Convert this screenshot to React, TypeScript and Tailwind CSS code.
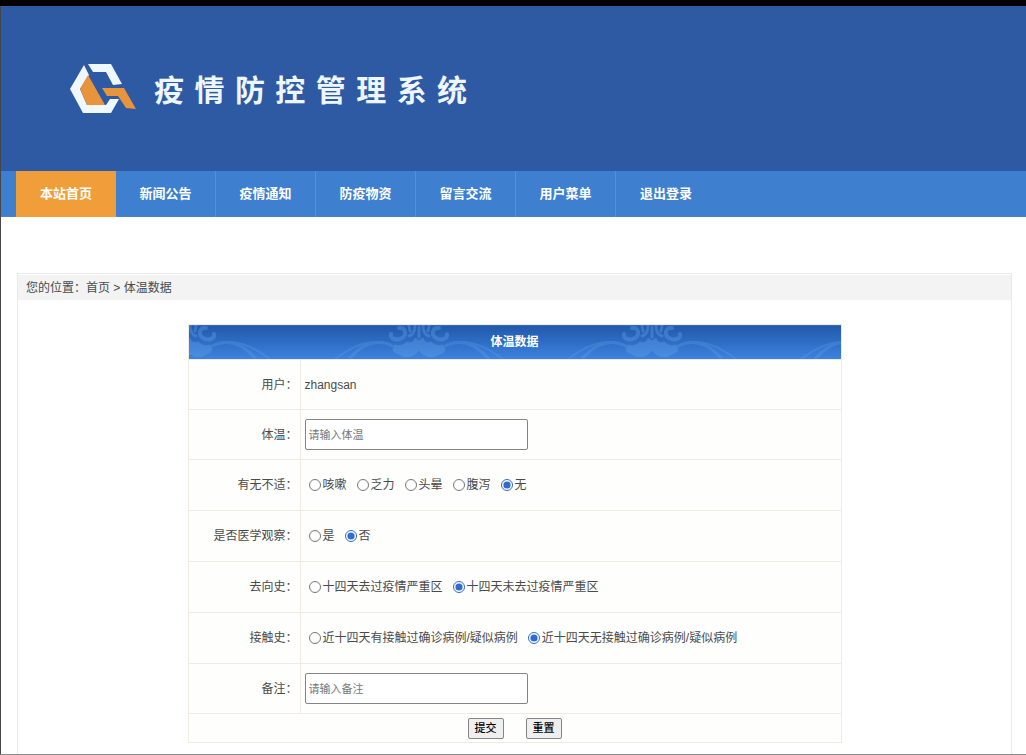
import { ReactNode } from "react";

const NAV_ITEMS = [
  "本站首页",
  "新闻公告",
  "疫情通知",
  "防疫物资",
  "留言交流",
  "用户菜单",
  "退出登录",
];

const Logo = () => (
  <svg width="66" height="50" viewBox="0 0 66 50" aria-hidden="true">
    <path
      d="M14 1 L19 11 L10 25 L17 41 H36 L40 35 H49 L41 49 H13 L0 25 Z"
      fill="#eef8fe"
    />
    <path d="M18 0 H41 L52 20 L43 21 L36 8 H23 Z" fill="#eef8fe" />
    <path d="M18 11 L35 41 H17 L10 25 Z" fill="#e8943c" />
    <path d="M32 24 H54 L66 45 L56 44 L48 32 H37 Z" fill="#e8943c" />
  </svg>
);

const Ornament = ({ x }: { x: number }) => (
  <g transform={`translate(${x} 0)`} fill="none" stroke="#64a5ec">
    <g strokeLinecap="round" opacity="0.36">
      <path
        strokeWidth="1"
        fill="#64a5ec"
        d="M0 25 C-4 32 -14 34 -20 29 C-27 28 -27 22 -24 20 C-18 22 -15 19 -12 17 C-8 19 -5 17 -4 13 L0 16 L4 13 C5 17 8 19 12 17 C15 19 18 22 24 20 C27 22 27 28 20 29 C14 34 4 32 0 25 Z"
      />
      <path
        strokeWidth="4"
        d="M-20 3 C-13 2 -12 10 -17 13 C-22 16 -29 14 -28 9 M20 3 C13 2 12 10 17 13 C22 16 29 14 28 9"
      />
      <path
        strokeWidth="3"
        d="M-4 0 C-4 6 -6 10 -10 11 M4 0 C4 6 6 10 10 11 M-10 1 L-9 6 M10 1 L9 6 M0 2 V12"
      />
    </g>
    <g strokeWidth="3" opacity="0.28">
      <path d="M26 21 C42 13 57 19 70 34 M-26 21 C-42 13 -57 19 -70 34" />
      <path
        strokeWidth="2"
        d="M40 17 C56 16 70 24 84 34 M-40 17 C-56 16 -70 24 -84 34"
      />
    </g>
  </g>
);

type RowProps = {
  label: string;
  htmlFor?: string;
  className?: string;
  children: ReactNode;
};

const Row = ({ label, htmlFor, className = "h-[50px]", children }: RowProps) => (
  <tr className={className}>
    <th
      scope="row"
      className="border border-[#f1eadf] pr-[2px] text-right font-normal"
    >
      {htmlFor ? <label htmlFor={htmlFor}>{label}：</label> : `${label}：`}
    </th>
    <td className="border border-[#f1eadf] px-1">{children}</td>
  </tr>
);

type RadioRowProps = {
  label: string;
  name: string;
  options: string[];
  selected: string;
};

const RadioRow = ({ label, name, options, selected }: RadioRowProps) => (
  <Row label={label} className="h-[51px]">
    <div role="radiogroup" aria-label={label} className="flex gap-2.5 pl-1">
      {options.map((option) => (
        <label key={option} className="flex items-center gap-0.5">
          <input
            type="radio"
            name={name}
            value={option}
            defaultChecked={option === selected}
            className="h-3 w-3 accent-[#2f6bd0]"
          />
          {option}
        </label>
      ))}
    </div>
  </Row>
);

const TextInput = ({ id, placeholder }: { id: string; placeholder: string }) => (
  <input
    id={id}
    name={id}
    type="text"
    placeholder={placeholder}
    className="block h-[31px] w-[223px] rounded-xs border border-[#858585] bg-white px-[3px] text-[11px] placeholder:text-[#777]"
  />
);

const BUTTON_CLASS =
  "h-[21px] w-9 rounded-xs border border-[#858585] bg-[#efefef] text-[11px] leading-none font-medium text-black";

export default function App() {
  return (
    <div className="flex min-h-screen flex-col border-t-[6px] border-b border-t-black border-b-[#8a8a8a] bg-white font-['Liberation_Sans','Noto_Sans_CJK_SC',sans-serif] text-xs text-[#4a4a4a]">
      <div className="flex flex-1 flex-col border-l border-[#44464c]">
        <header className="flex h-[165px] items-center gap-[18px] bg-[#2d5aa3] pl-[69px]">
          <Logo />
          <h1 className="pt-1 font-['DejaVu_Sans','Noto_Sans_CJK_SC',sans-serif] text-[30px] leading-10 font-bold text-[#eef6ff]">
            疫 情 防 控 管 理 系 统
          </h1>
        </header>

        <nav className="flex h-[46px] bg-[#3e7fcf] pl-[15px] shadow-[inset_0_-1px_0_#4f7fb8]">
          {NAV_ITEMS.map((item, index) => (
            <a
              key={item}
              href="#"
              className={
                index === 0
                  ? "flex w-[100px] items-center justify-center bg-[#f09e3a] text-[13px] font-bold text-white"
                  : "flex w-[100px] items-center justify-center border-r border-[#5590d8] text-[13px] font-bold text-white last:border-r-0"
              }
            >
              {item}
            </a>
          ))}
        </nav>

        <main className="mt-14 mr-3.5 ml-4 flex-1 border border-b-0 border-[#e9e9e9]">
          <div className="mt-px h-[25px] bg-[#f3f3f3] px-2 leading-[26px]">
            您的位置：<a href="#">首页</a> &gt; 体温数据
          </div>

          <form className="mt-6 pb-2" onSubmit={(e) => e.preventDefault()}>
            <table className="mx-auto w-full max-w-[654px] table-fixed border-collapse border border-[#f1eadf] bg-[#fefefd]">
              <colgroup>
                <col className="w-28" />
                <col />
              </colgroup>
              <thead>
                <tr className="h-[35px]">
                  <th
                    colSpan={2}
                    className="relative overflow-hidden bg-linear-to-b from-[#2159ab] to-[#3d83e0] text-white"
                  >
                    <svg
                      className="absolute inset-0 h-full w-full"
                      aria-hidden="true"
                    >
                      <Ornament x={-3} />
                      <Ornament x={230} />
                      <Ornament x={463} />
                      <Ornament x={696} />
                    </svg>
                    <span className="relative">体温数据</span>
                  </th>
                </tr>
              </thead>
              <tbody>
                <Row label="用户">zhangsan</Row>
                <Row label="体温" htmlFor="temperature">
                  <TextInput id="temperature" placeholder="请输入体温" />
                </Row>
                <RadioRow
                  label="有无不适"
                  name="symptom"
                  options={["咳嗽", "乏力", "头晕", "腹泻", "无"]}
                  selected="无"
                />
                <RadioRow
                  label="是否医学观察"
                  name="observation"
                  options={["是", "否"]}
                  selected="否"
                />
                <RadioRow
                  label="去向史"
                  name="travel"
                  options={["十四天去过疫情严重区", "十四天未去过疫情严重区"]}
                  selected="十四天未去过疫情严重区"
                />
                <RadioRow
                  label="接触史"
                  name="contact"
                  options={[
                    "近十四天有接触过确诊病例/疑似病例",
                    "近十四天无接触过确诊病例/疑似病例",
                  ]}
                  selected="近十四天无接触过确诊病例/疑似病例"
                />
                <Row label="备注" htmlFor="remark">
                  <TextInput id="remark" placeholder="请输入备注" />
                </Row>
                <tr className="h-[29px]">
                  <td colSpan={2} className="border border-[#f1eadf]">
                    <div className="flex justify-center gap-[22px]">
                      <button type="submit" className={BUTTON_CLASS}>
                        提交
                      </button>
                      <button type="reset" className={BUTTON_CLASS}>
                        重置
                      </button>
                    </div>
                  </td>
                </tr>
              </tbody>
            </table>
          </form>
        </main>
      </div>
    </div>
  );
}
